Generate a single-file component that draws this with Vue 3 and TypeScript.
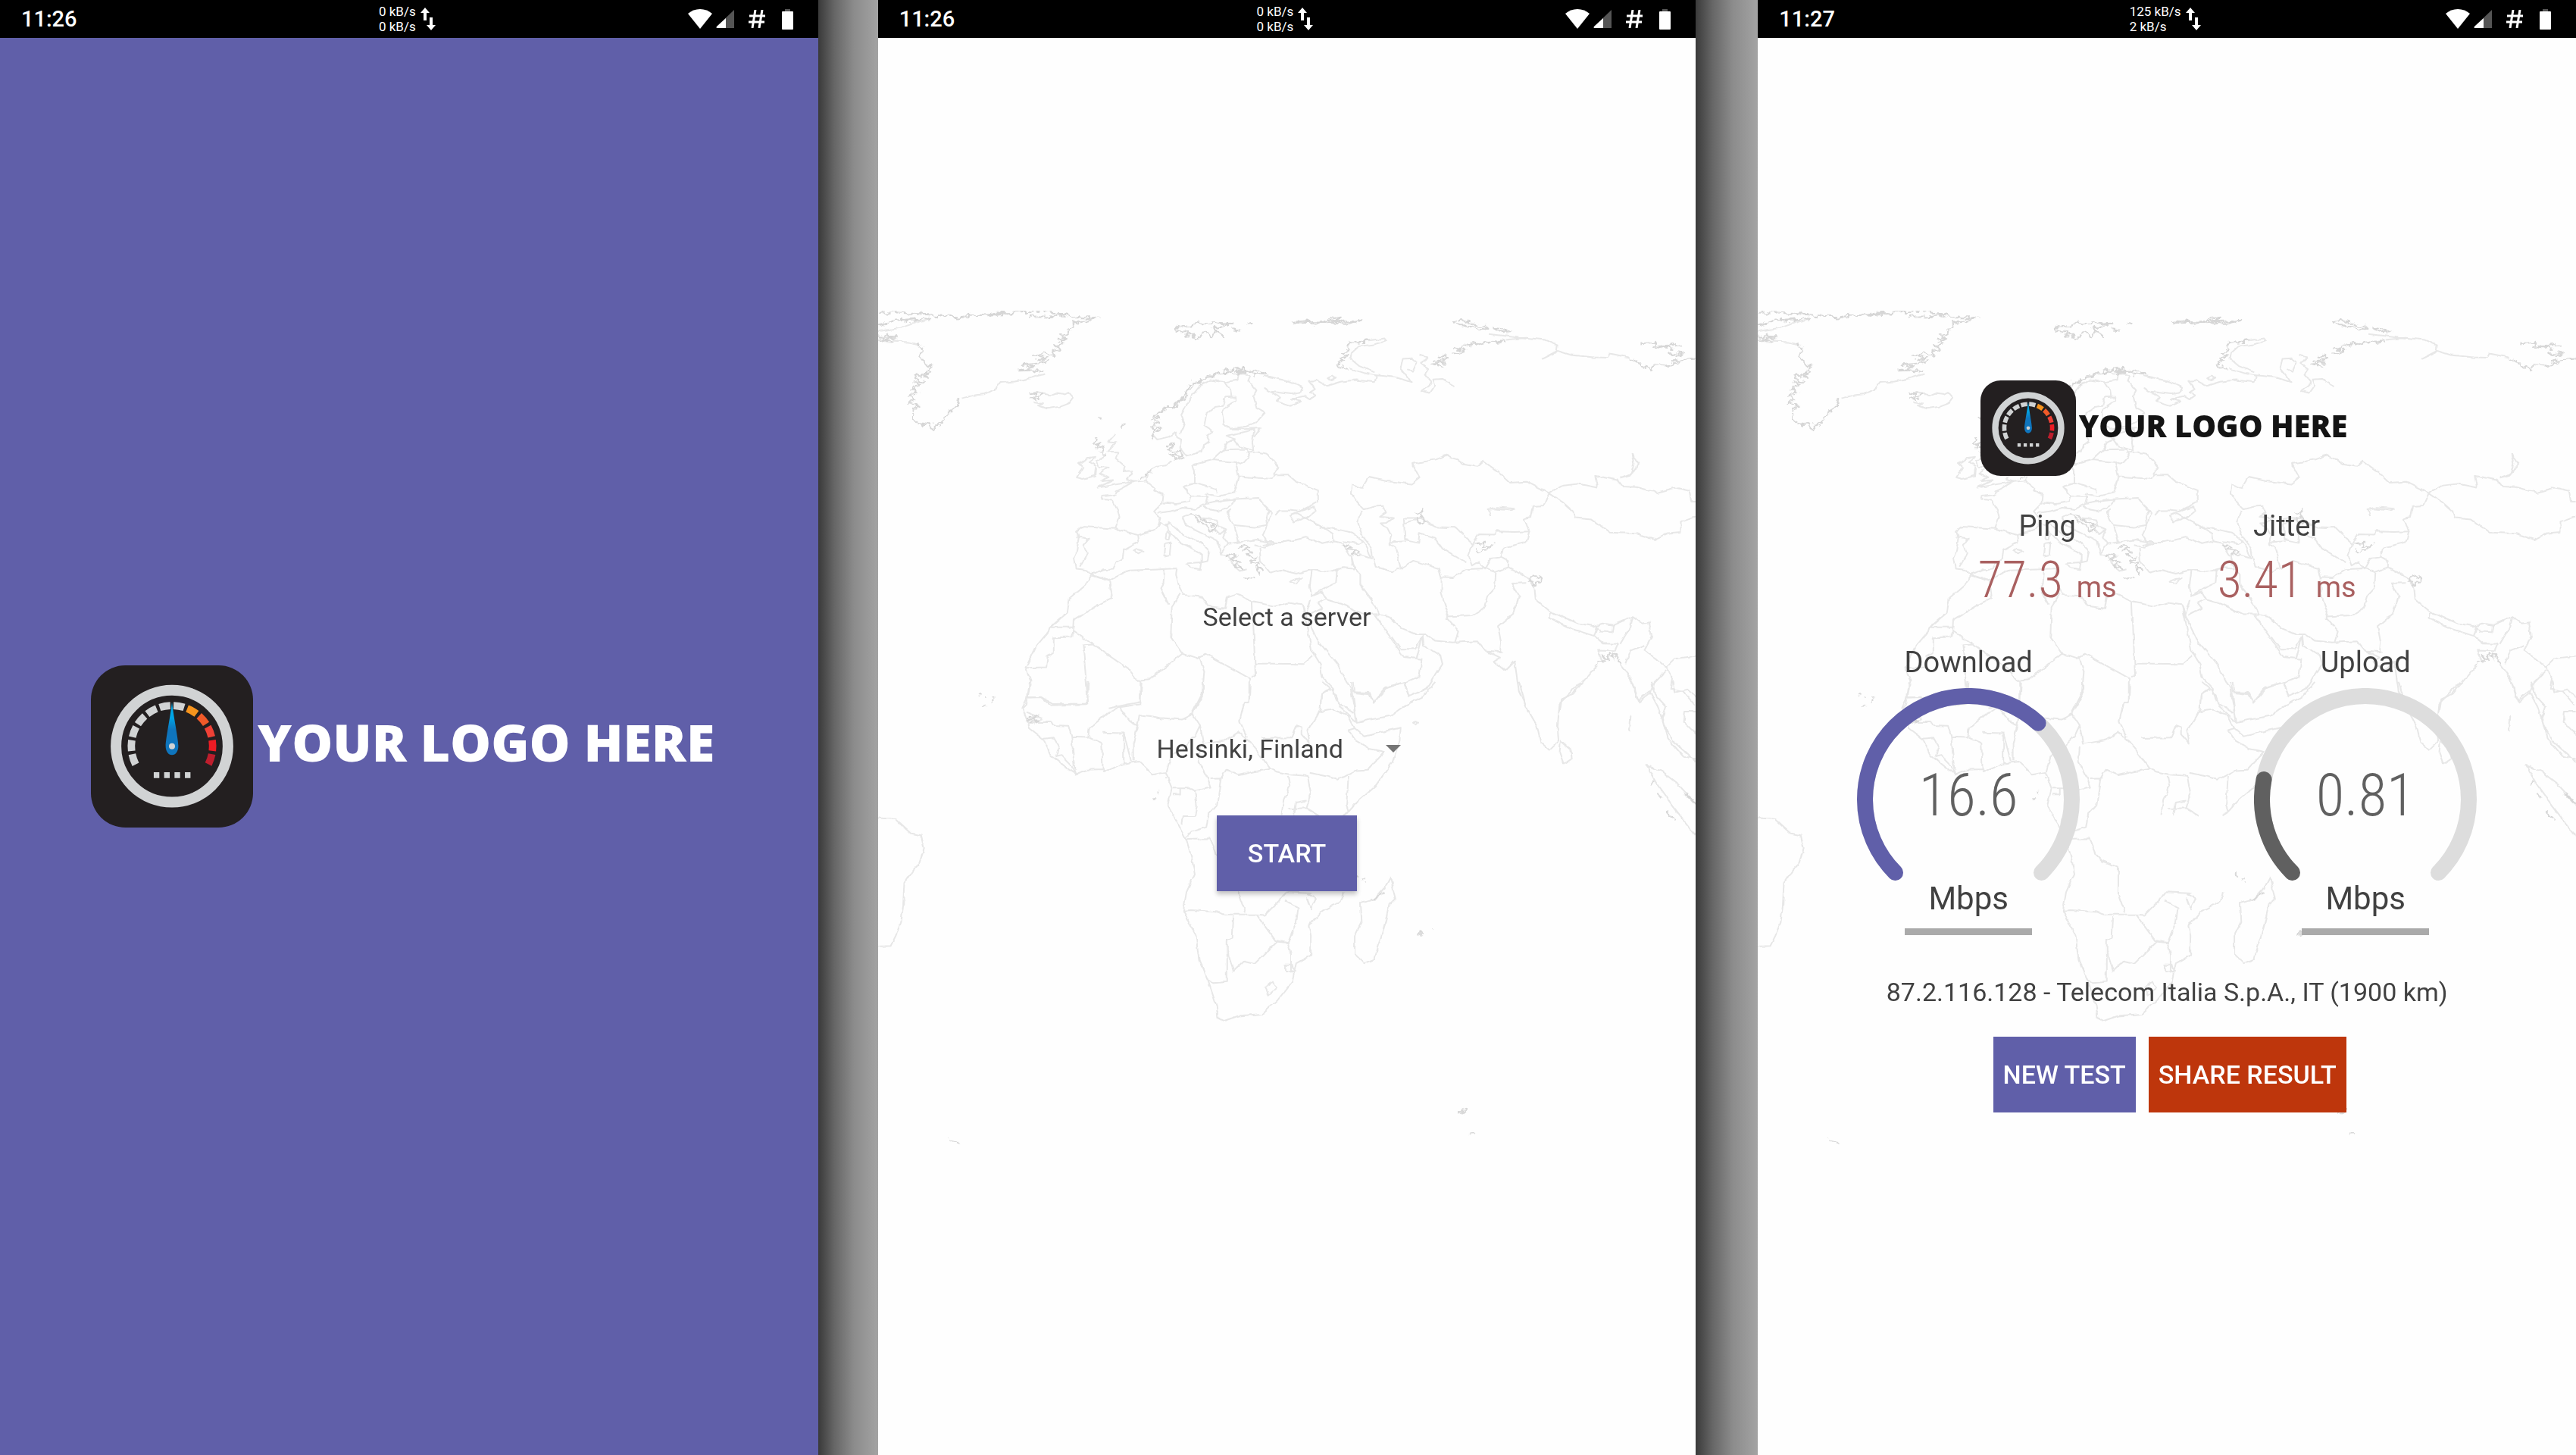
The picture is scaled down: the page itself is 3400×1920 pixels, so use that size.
<script setup lang="ts">
interface Phone {
  id: string
  kind: 'splash' | 'select' | 'result'
  time: string
  up: string
  down: string
}

const phones: Phone[] = [
  { id: 'splash', kind: 'splash', time: '11:26', up: '0 kB/s', down: '0 kB/s' },
  { id: 'select', kind: 'select', time: '11:26', up: '0 kB/s', down: '0 kB/s' },
  { id: 'result', kind: 'result', time: '11:27', up: '125 kB/s', down: '2 kB/s' },
]

const latencies = [
  { label: 'Ping', value: '77.3' },
  { label: 'Jitter', value: '3.41' },
]

const gauges = [
  { label: 'Download', value: '16.6', share: 65.7, color: '#605fa9' },
  { label: 'Upload', value: '0.81', share: 20.8, color: '#606060' },
]

const arc = 'M50.5 243.5A136.5 136.5 0 1 1 243.5 243.5'

const tickColors = [
  '#d1d3d4', '#d1d3d4', '#d1d3d4', '#d1d3d4', '#d1d3d4', '#d1d3d4',
  '#d1d3d4', '#f7941d', '#f15a29', '#ef4136', '#ed1c24', '#be1e2d',
]

function polar(r: number, deg: number): string {
  const a = (deg * Math.PI) / 180
  return `${(320 + r * Math.sin(a)).toFixed(1)} ${(319 - r * Math.cos(a)).toFixed(1)}`
}

const ticks = tickColors.map((color, i) => {
  const mid = -109 + i * 19.8
  return {
    color,
    d: `M${polar(175, mid - 7.6)}A175 175 0 0 1 ${polar(175, mid + 7.6)}L${polar(146, mid + 7.6)}A146 146 0 0 0 ${polar(146, mid - 7.6)}Z`,
  }
})

/* Coastlines drawn heavier, where fjords and islands crowd together */
const northRugged = [
  'M0 92L30 90 60 94 108 100 150 108 180 102 200 100 220 94 240 98 262 90 280 86 320 90 345 93 360 98 330 104 290 106M350 96L372 110 420 110 395 124 372 130 374 145 364 150 368 164 350 172 358 182 344 196 355 205 338 215 350 228 335 236 340 250 318 240 300 248 322 256 305 266 326 272 300 280 274 284 300 292 270 306 295 304 318 312',
  'M0 178L36 180 10 188 30 196 0 190M0 136L40 118 80 112 50 122 100 112M200 96L230 99 210 104 250 94 226 92 260 94',
  'M78 206L84 230 78 250 86 270 92 290 102 284 94 304 102 312 84 320 96 330 70 322 74 340 90 350 66 348 82 362 64 372 76 386 58 398 72 410 60 426 76 430 64 446 70 462 66 478 76 500 88 505 96 498 106 522 118 504 126 480 140 456 152 438 154 412',
  'M524 560L528 530 540 520 524 510 540 496 522 488 538 480 524 470 548 456 552 440 570 440 580 415 590 400 588 380 604 366 600 350 616 352 622 336 640 330 650 314 668 314 680 298 690 308 700 296 712 312 726 306 738 322 716 318 700 306 684 314 664 304 650 324 630 322 616 346 596 360 586 394 574 420 560 446',
  'M568 150L580 140 600 142 610 130 630 138 640 126 676 132 650 144 640 150 660 176 645 160 640 178 625 160 612 188 600 184 608 172 588 176 596 160 574 160ZM676 152L694 156M708 134L718 130',
  'M794 126L820 122 842 128 860 122 868 108 884 112 872 120 890 126 924 120 895 134 870 130 850 128 836 134 820 128 808 130ZM850 124L880 116 866 128 888 130',
  'M938 194L920 200 905 200 898 215 904 228 890 236 900 250 884 262 892 272 878 282 892 294 900 296',
  'M1100 124L1116 118 1136 132 1160 140 1166 154 1146 148 1130 142 1112 140ZM1176 148L1196 152 1210 160 1190 164Z',
  'M1102 240L1124 230 1106 224 1120 212 1150 206 1168 196 1184 204 1200 192M1074 250L1090 262 1064 268 1084 276 1060 282 1082 294M1456 206L1490 200 1486 216 1520 224 1498 214 1540 208M1436 256L1450 264 1456 282 1480 298 1484 286 1510 290 1530 280 1516 270 1566 262M1512 238L1540 244 1528 252Z',
  'M290 392L302 386 300 400 312 394 308 410 296 404 304 420 290 408M420 550L412 580 424 572 418 596 432 590 424 610 436 618M422 470L426 488M470 504L467 520',
  'M550 590L560 574 566 590 556 602 568 608 578 600 584 620 568 632 556 618 570 616 582 634',
  'M690 960L702 948 712 956 698 970 716 974 706 988 724 996 712 1012 730 1018 722 1030 738 1046 724 1040 730 1060M702 1072L716 1080 724 1078M668 984L684 992 676 1006 694 1014 680 1024 698 1040 690 1022',
  'M598 834L610 852 620 872 634 888 648 904 640 892 650 884 632 870 618 850 606 836',
  'M890 946L908 956 896 966 916 970 906 986 922 990M1030 830L1044 818 1036 850 1048 860 1038 872 1028 852M1140 946L1160 940 1154 956 1178 950 1164 968 1144 970',
  'M1376 1386L1392 1380 1384 1356 1398 1376 1400 1350 1408 1370 1412 1350 1420 1390M500 706L514 700 510 690 524 684M1246 1070L1256 1062 1268 1078 1258 1098 1248 1084Z',
]

/* Plain coastlines and borders of the northern half */
const northLines = [
  'M318 318L290 335 260 346 234 350 226 372 205 392 180 398 160 408M60 200L78 210M0 196L60 200M0 160L42 148 70 130 100 112',
  'M302 386L330 396 340 388 356 392 364 384 374 406 366 426 350 438 324 446 306 434 316 426 298 420',
  'M524 540L534 560 556 550 570 534 572 552 580 560 578 590 590 620 606 612 620 608 624 580 634 566 628 545 640 530 624 510 628 466 644 440 660 436 664 404 684 402 686 414 668 436 658 460 662 504 672 520 706 512 722 500 740 462 724 444 718 400 724 378 708 344 712 324',
  'M578 540L586 500 580 470 588 440 600 400 614 366 636 340 664 348 674 376 676 400M664 348L688 340 690 320 712 322',
  'M738 322L760 334 790 346 812 366 808 388 790 392 748 382 740 370 768 404 764 420 788 436 810 420 790 410 816 400 826 412 838 396 826 386 836 374 824 344 840 342 858 362 886 346 914 340 950 348 954 324 930 314 902 298M860 334l8-8 8 8-8 8ZM950 322L990 330 1020 348 1012 326 1000 296 1004 262 1020 260 1030 276 1022 310 1014 300M1036 248L1050 256 1040 280 1054 300 1046 324 1058 350 1040 380 1056 388 1066 360 1062 338 1080 336 1104 362M938 194L970 186 974 196 950 208 920 216 906 240 904 262 920 288 950 312',
  'M1200 192L1240 184 1276 192 1300 212 1298 236 1270 262 1300 232 1326 248 1370 256 1396 258 1400 242 1436 256M1170 170L1210 180 1240 188',
  'M436 618L416 640 424 660 440 664 424 684 440 700 428 714 450 710 420 738 450 728 490 716 474 708 486 690 484 676 470 678 472 658 456 632 460 606 440 604 456 572 440 570 454 540',
  'M400 628L384 650 392 664 380 700 392 706 416 694 418 660 404 642 416 624ZM490 716L468 740 456 752 454 764 430 770 428 780 448 786 458 820 462 850 454 890 420 886 390 882 380 898 384 920 380 970 374 996 378 1038 398 1042 408 1060 430 1040 450 1038 456 1012 468 1000 470 970 498 940 496 914 530 892 540 870 552 882 556 868 572 890 580 908 600 924 620 946 634 972 630 1010 620 1014 620 986 600 962 574 936 556 900 552 872',
  'M454 890L498 914M380 920L404 926 394 950 400 980 386 1030M588 1018L618 1014 616 1040 600 1034ZM550 944L560 940 558 986 548 990ZM552 902L558 912 556 930 550 924ZM490 974l6-8 12 6-8 12Z',
  'M490 716L512 712 516 680 534 660 552 656 560 640M512 712L530 740 528 752 546 762 544 794 528 826 540 850 536 882M546 794L570 798 596 790 600 768 584 734 606 722 606 680 602 654M602 654L640 636 684 644 690 696 684 736 680 758 650 770 626 760M606 722L630 734 646 744 648 760M600 768L630 770 626 800 606 818 584 812 560 824 536 832M626 796L660 784 684 780 668 816 650 826 634 822 624 806M684 780L728 776 740 806 750 824 742 850 744 876 720 884 680 876 668 830 676 818M690 696L752 706 760 690 784 690 800 716 842 748 842 790 806 826 788 822 768 822 760 840',
  'M640 636L660 600 706 598 712 616 696 650 684 644M660 600L668 572 680 560 690 586 718 600 716 570 720 524 690 536 668 546 684 560M706 610L726 606 746 614 766 662 756 692 M672 520L700 522 732 518 720 550',
  'M728 776L738 800 754 830 744 880 736 914 744 938 724 930 690 940 682 880M744 938L780 938 820 922 850 946 872 936 870 908 846 880 816 850 796 864 788 842 802 832 820 852 836 826 834 808 806 826M598 834L584 850 590 880 612 900 634 920 650 936 656 984 670 990 682 1030 692 1046 704 1040M618 850L648 856 652 880 666 892 660 920 670 946 690 940M666 892L654 910 646 894M670 946L656 980M736 950L756 944 740 960 720 950 M730 960L732 1010 750 1052 770 1042 800 1056 830 1042 860 1050 890 1034 910 1038 904 990 890 944 872 936',
  'M846 884L880 892 906 904 928 934 918 944 890 936M928 934L936 960 944 1000 920 986M904 986L906 1020 924 1060 924 1100 944 1150 958 1206 976 1212 1000 1256 1030 1280 1048 1280 1066 1304 1100 1310 1148 1306 1162 1340 1194 1346',
  'M800 1076L810 1072 800 1092 788 1086ZM830 1044L826 1100 830 1136 858 1106 876 1090 878 1042 M408 1060L440 1080 480 1044 540 1040 572 1036 570 1060 576 1100 584 1134 620 1142 632 1176 664 1184 668 1144 686 1132 716 1160 760 1176 784 1164 812 1172 818 1210 828 1150 M828 1140L850 1124 858 1150 842 1164 850 1184 824 1210M858 1152L890 1170 930 1206 958 1206',
  'M926 740L908 728 906 760 916 790 930 818 950 808 966 806 972 830 960 846 986 850 974 868 960 870 974 886 982 916 978 944 990 962 1000 1036 984 1048 952 1030 946 990 944 960 926 914 918 866 926 826',
  'M926 740L938 700 974 714 1020 724 1036 700 1022 650 1066 634 1088 618 1104 632 1120 652 1146 660 1158 640 1184 676 1208 720 1240 716 1284 758 1274 804 1254 806 1250 846 1236 852 1246 900 1218 902 1184 900 1180 912 1150 910 1138 944 1120 914 1106 886 1070 884 1036 850 1006 850 1008 930 1034 940 1036 908 1066 926 1080 964 1124 1014 M1036 850L1006 870 M978 940L1010 936',
  'M1284 758L1310 730 1340 724 1376 738 1372 694 1414 710 1424 734 1450 736 1490 756 1526 738 1552 750 1556 790 1566 790M1284 758L1310 792 1330 826 1334 850 1366 856 1400 904 1452 908 1486 930 1512 906 1536 902 1536 866 1566 844M1442 612L1454 650 1440 694 1422 704 1440 690 1446 650ZM1172 846L1168 818 1184 810 1216 816 1210 822 1178 816',
  'M1246 900L1240 940 1196 960 1192 994 1206 1010 1206 1032 1246 1076 1256 1110 1258 1150 1286 1196 1340 1240 1370 1250 1386 1240 1408 1246 1444 1216 1462 1240 1476 1236 1480 1290 1466 1340 1490 1370 1508 1400 1524 1370 1566 1360M1138 944L1130 990 1136 1026 1150 1010 1160 1040 1172 1000 1196 994M1000 1036L1024 1008 1072 1036 1078 1068 1100 1070 1124 1040 1160 1036 1182 1050 1206 1032M1182 1050L1180 1110 1166 1140 1160 1180 1136 1210 1088 1214M1078 1068L1078 1130 1090 1200 1088 1220 1110 1270 1104 1308M1240 1090L1212 1092 1226 1140 1216 1200 1186 1250 1192 1310 1190 1350',
  'M1286 1196L1284 1220 1330 1262 1370 1286 1376 1250M1376 1250L1382 1270 1406 1272 1408 1246M1370 1286L1388 1314 1416 1316 1410 1342 1376 1340 1388 1386M1162 1340L1190 1366 1178 1380 1200 1416 1218 1380 1226 1490 1244 1568M1376 1392L1330 1500 1308 1520 1304 1568M1420 1316L1440 1250 1444 1216M1420 1390L1440 1440 1456 1530 1476 1500 1484 1460 1508 1412M1466 1320L1440 1340 1430 1390M1508 1400L1520 1440 1516 1480 1540 1490 1562 1540',
  'M408 1062L396 1100 366 1150 362 1200 328 1256 326 1270 300 1330 282 1404 292 1450 284 1540 276 1556M408 1062L444 1084 448 1146 420 1172 374 1228 372 1290 336 1292 336 1350 324 1362 322 1402 284 1404M328 1254L372 1254M374 1268L480 1410 496 1450 520 1446 582 1352 560 1290 562 1180 578 1130M548 1040L546 1090 540 1110 556 1170M412 1318L392 1320 402 1536 334 1538 312 1512 286 1514M502 1450L502 1530 440 1554',
  'M582 1352L610 1370 626 1352 712 1444 710 1530 700 1536 696 1568M616 1366L624 1420 620 1500 602 1568M716 1160L722 1432 714 1434M722 1388L814 1390 832 1360M812 1172L830 1340 846 1390 850 1440 870 1480 848 1500 846 1560M818 1210L840 1300 878 1390 904 1480 912 1568M914 1494L940 1496 948 1532 970 1476 1006 1458 1036 1434 1040 1372 1006 1364 980 1290 950 1210M1006 1458L1016 1510 1050 1480 1080 1390 1076 1360 1044 1320 1042 1284 1028 1334 1000 1334 984 1290M1042 1284L1030 1370M870 1480L878 1530 910 1568',
]

/* Southern half */
const southLines = [
  'M290 0L286 50 276 84 284 120 290 150 316 184 330 236 376 298 400 284 430 282 432 292 470 264 500 258 526 300 550 292 562 344 554 400 574 460 590 510 600 570 606 620 590 680 584 740 608 820 614 900 632 970 648 1050 650 1086 662 1096 690 1080 736 1074 764 1030 792 970 800 910 828 884 828 820 824 790 850 740 884 710 890 680M286 50L312 50 330 76 400 72 402 0M284 100L312 118M284 130L330 130 334 140 364 142 370 176 402 178 404 150 440 100 462 82 502 72 504 0M316 184L336 180 346 210 340 240 350 236 370 270 376 298M370 176L376 284M404 178L428 196 430 282M428 164L470 166 470 264M470 166L484 256M462 82L484 130 496 144 488 200 488 256M496 144L500 106 540 116 580 122 602 104 622 40 622 0',
  'M602 104L616 140 606 176 580 220 560 244 552 292M616 140L622 200 630 198 664 190 690 162 712 196 724 220 750 280 762 290 790 300 824 304M710 0L710 66 700 70 692 126 706 180M616 210L614 260 630 310 636 340 606 350 600 344 564 344M636 314L656 312 666 284 690 302 720 290 750 282M656 312L648 400 632 430 628 470 600 484 590 500M564 364L578 364 578 344M606 350L610 400 606 434 584 434 582 462M590 508L634 506 646 556 660 580 690 600 690 690 702 746M584 740L600 738 650 744 660 752 724 752 740 754 766 710 780 680 830 684M724 752L740 790 760 836 784 844 800 780 804 730 780 708M680 758L678 830 668 836 668 970 640 974 632 966M668 870L680 936 700 904 720 912 764 840 784 844 790 880 790 940 800 936M740 990L754 970 764 986 746 1012Z',
  'M734 182L790 180 800 140 810 146 810 170 826 200 822 160 840 110 846 90 848 40 864 20 850 0M846 96L872 90 900 110 912 150 900 156 914 190 940 216 968 226 936 284 914 286 880 316 860 306 826 294M912 150L930 176 1000 148 998 190 984 260 950 340 916 390 900 420 888 432M900 304L896 400 900 420M784 304L788 340 776 380 772 430M822 304L828 360 820 408 784 410M796 430L800 390 820 384M820 408L846 434M868 20L884 80 916 130 980 110 1008 76 1040 50 1066 0M910 0L912 34 940 40 948 68 972 20 1006 0 1016 48M916 130L912 90 906 0M1022 132l6-4 6 4-6 6ZM822 686L838 700 828 736 820 700',
  'M980 632L990 700 978 720 970 780 950 896 930 910 912 880 912 820 924 780 922 716 950 704 968 670ZM780 914L792 914 796 940 780 936Z',
  'M0 440L34 444 64 490 82 496 88 540 78 590 66 610 50 650 48 720 44 780 34 820 24 854 0 856M1226 0L1240 80 1260 140 1268 196 1284 220 1302 190 1300 150 1304 70 1346 0M1306 190L1324 216 1326 250 1312 266 1304 230ZM1442 0L1454 60 1476 30 1492 80 1504 140 1520 190 1566 260M1470 270L1490 330 1520 400 1566 500M1470 270L1500 290 1530 330 1552 370 1566 400M1480 0L1486 40 1508 80 1500 120 1510 180 1540 240 1566 250M1520 0L1524 34 1550 24 1566 50M1566 96L1544 96 1542 130 1566 170M1440 110L1438 160',
]

const southRugged = [
  'M284 116L310 110 286 124 312 124 290 132M946 706L960 690 966 676M1112 1396L1116 1378 1126 1388 1118 1396 1116 1384M1132 1462h6M134 1480L148 1486 156 1498M1036 816l4-4 2 8M1060 800h2M194 40h4M206 46h4M218 52v12M200 80h8M548 314h4M536 350v6M528 384v-8M916 620v14M926 638h6M936 648v4M1540 360L1560 380 1550 372 1566 400M1478 330h4M1492 360l8 16M1508 420l18 32',
]
</script>

<template>
  <svg class="defs" aria-hidden="true">
    <defs>
      <filter id="rugged" x="0" y="0" width="100%" height="100%">
        <feTurbulence type="fractalNoise" baseFrequency="0.11" numOctaves="3" seed="4" />
        <feDisplacementMap in="SourceGraphic" scale="11" xChannelSelector="R" yChannelSelector="G" />
      </filter>
      <filter id="coast" x="0" y="0" width="100%" height="100%">
        <feTurbulence type="fractalNoise" baseFrequency="0.09" numOctaves="2" seed="9" />
        <feDisplacementMap in="SourceGraphic" scale="5" xChannelSelector="R" yChannelSelector="G" />
      </filter>
      <linearGradient id="needle" x1="0" y1="0" x2="0" y2="1">
        <stop offset="0" stop-color="#00aeef" />
        <stop offset="0.3" stop-color="#00a3e4" />
        <stop offset="0.52" stop-color="#0f75bd" />
        <stop offset="1" stop-color="#0f75bd" />
      </linearGradient>
      <symbol id="logo-mark" viewBox="0 0 640 640">
        <rect width="640" height="640" rx="136" fill="#231f20" />
        <circle cx="320" cy="319" r="221" fill="none" stroke="#d1d3d4" stroke-width="42" />
        <path v-for="tick in ticks" :key="tick.d" :d="tick.d" :fill="tick.color" />
        <path d="M320 144C324 190 345 290 345 318C345 340 334 354 320 354S295 340 295 318C295 290 316 190 320 144Z" fill="url(#needle)" />
        <circle cx="320" cy="319" r="12" fill="#d1d3d4" />
        <path d="M248 422h22v23h-22ZM289 422h22v23h-22ZM330 422h22v23h-22ZM371 422h22v23h-22Z" fill="#d1d3d4" />
      </symbol>
      <symbol id="world" viewBox="0 0 1080 1160">
        <g filter="url(#coast)">
          <g class="lines" transform="scale(.69 .357143)">
            <path v-for="d in northLines" :key="d" :d="d" />
          </g>
          <g class="lines" transform="translate(0 520) scale(.69 .408163)">
            <path v-for="d in southLines" :key="d" :d="d" />
          </g>
        </g>
        <g filter="url(#rugged)">
          <g class="lines heavy" transform="scale(.69 .357143)">
            <path v-for="d in northRugged" :key="d" :d="d" />
          </g>
          <g class="lines heavy" transform="translate(0 520) scale(.69 .408163)">
            <path v-for="d in southRugged" :key="d" :d="d" />
          </g>
        </g>
      </symbol>
    </defs>
  </svg>

  <main class="board">
    <section v-for="phone in phones" :key="phone.id" class="phone" :class="phone.kind">
      <header class="status">
        <time class="clock">{{ phone.time }}</time>
        <div class="traffic">
          <div class="rates">
            <span>{{ phone.up }}</span>
            <span>{{ phone.down }}</span>
          </div>
          <svg class="arrows" viewBox="0 0 20 30" aria-hidden="true">
            <path d="M6 0L12 7H8V17H4V7H0ZM14 30L8 23H12V13H16V23H20Z" fill="#fff" />
          </svg>
        </div>
        <div class="indicators">
          <svg class="wifi" viewBox="0 0 32 26" aria-hidden="true">
            <path d="M16 26L0 6Q7 0 16 0T32 6Z" fill="#fff" />
          </svg>
          <svg class="signal" viewBox="0 0 24 24" aria-hidden="true">
            <path d="M24 0V24H1Q0 23 1 22Z" fill="#555" />
            <path d="M13 11V24H1Q0 23 1 22Z" fill="#fff" />
          </svg>
          <svg class="hash" viewBox="0 0 22 24" aria-hidden="true">
            <path d="M9 0L5 24M18 0L14 24M1 8H22M0 16H21" fill="none" stroke="#fff" stroke-width="3" />
          </svg>
          <svg class="battery" viewBox="0 0 15 27" aria-hidden="true">
            <path d="M4 0h7v3h-7z" fill="#555" />
            <rect y="3" width="15" height="24" rx="1" fill="#fff" />
          </svg>
        </div>
      </header>

      <div v-if="phone.kind === 'splash'" class="body splash-body">
        <div class="logo large">
          <svg class="mark" aria-hidden="true"><use href="#logo-mark" /></svg>
          <span class="wordmark">YOUR LOGO HERE</span>
        </div>
      </div>

      <div v-else-if="phone.kind === 'select'" class="body">
        <svg class="map" viewBox="0 0 1080 1160" aria-hidden="true"><use href="#world" /></svg>
        <label class="prompt" for="server">Select a server</label>
        <div class="picker">
          <select id="server">
            <option>Helsinki, Finland</option>
          </select>
          <svg class="caret" viewBox="0 0 20 10" aria-hidden="true">
            <path d="M0 0H20L10 10Z" fill="#757575" />
          </svg>
        </div>
        <button type="button" class="action start">START</button>
      </div>

      <div v-else class="body">
        <svg class="map" viewBox="0 0 1080 1160" aria-hidden="true"><use href="#world" /></svg>
        <div class="logo small">
          <svg class="mark" aria-hidden="true"><use href="#logo-mark" /></svg>
          <span class="wordmark">YOUR LOGO HERE</span>
        </div>
        <div class="latencies">
          <div v-for="item in latencies" :key="item.label" class="latency">
            <span class="name">{{ item.label }}</span>
            <span class="reading"><span class="figure">{{ item.value }}</span><span class="unit">ms</span></span>
          </div>
        </div>
        <div class="gauges">
          <div v-for="gauge in gauges" :key="gauge.label" class="gauge">
            <span class="name">{{ gauge.label }}</span>
            <div class="dial">
              <svg viewBox="0 0 294 254" aria-hidden="true">
                <path :d="arc" class="track" />
                <path :d="arc" class="fill" pathLength="100" :stroke="gauge.color" :stroke-dasharray="`${gauge.share} 200`" />
              </svg>
              <span class="speed">{{ gauge.value }}</span>
            </div>
            <span class="mbps">Mbps</span>
          </div>
        </div>
        <p class="provider">87.2.116.128 - Telecom Italia S.p.A., IT (1900 km)</p>
        <div class="actions">
          <button type="button" class="action">NEW TEST</button>
          <button type="button" class="action share">SHARE RESULT</button>
        </div>
      </div>
    </section>
  </main>
</template>

<style>
body {
  margin: 0;
}
</style>

<style scoped>
.defs {
  position: absolute;
  width: 0;
  height: 0;
}

.board {
  display: grid;
  grid-template-columns: 1fr 79px 1fr 82px 1fr;
  min-height: 100vh;
  background: #fefefe;
  font-family: Roboto, "Liberation Sans", sans-serif;
  color: #414141;
}

.board::before,
.board::after {
  content: "";
  grid-row: 1;
  background: linear-gradient(90deg, #3a3a3a, #666 27%, #8c8c8c 60%, #a3a3a3);
}

.board::before {
  grid-column: 2;
}

.board::after {
  grid-column: 4;
}

.phone {
  grid-row: 1;
  display: flex;
  flex-direction: column;
  background: #fefefe;
}

.phone.splash {
  grid-column: 1;
  background: #605fa9;
}

.phone.select {
  grid-column: 3;
}

.phone.result {
  grid-column: 5;
}

.status {
  display: grid;
  grid-template-columns: 1fr auto 1fr;
  align-items: center;
  height: 50px;
  padding: 0 33px 0 28px;
  background: #000;
  color: #fff;
}

.clock {
  font-size: 29px;
  font-weight: 500;
  line-height: 34px;
}

.traffic {
  display: flex;
  align-items: center;
  gap: 6px;
}

.rates {
  display: flex;
  flex-direction: column;
  font-size: 17px;
  line-height: 20px;
}

.arrows {
  width: 20px;
  height: 30px;
}

.indicators {
  display: flex;
  justify-content: flex-end;
  align-items: center;
}

.wifi {
  width: 32px;
  height: 26px;
  margin-right: 5px;
}

.signal {
  width: 24px;
  height: 24px;
  margin-right: 19px;
}

.hash {
  width: 22px;
  height: 24px;
  margin-right: 22px;
}

.battery {
  width: 15px;
  height: 27px;
}

.body {
  position: relative;
  z-index: 0;
  flex: 1;
  display: flex;
  flex-direction: column;
  justify-content: center;
  align-items: center;
}

.splash-body {
  align-items: flex-start;
  padding-left: 120px;
}

.map {
  position: absolute;
  z-index: -1;
  top: 330px;
  left: 0;
  width: 100%;
}

.lines {
  fill: none;
  stroke: #e7e7e7;
  stroke-width: 2px;
  stroke-linejoin: round;
}

.lines path {
  vector-effect: non-scaling-stroke;
}

.heavy {
  stroke: #d6d6d6;
}

.logo {
  display: flex;
  align-items: center;
  font-family: "Open Sans", "Noto Sans", sans-serif;
  font-weight: 800;
  white-space: nowrap;
}

.large {
  gap: 6px;
  color: #fff;
  font-size: 68px;
  line-height: 84px;
}

.large .mark {
  width: 214px;
  height: 214px;
}

.large .wordmark {
  padding-bottom: 13px;
}

.small {
  gap: 4px;
  padding-right: 8px;
  color: #141414;
  font-size: 40px;
  line-height: 48px;
}

.small .mark {
  width: 126px;
  height: 126px;
}

.small .wordmark {
  padding-bottom: 6px;
}

.prompt {
  font-size: 34px;
  line-height: 40px;
}

.picker {
  position: relative;
  width: 344px;
  margin: 124px 0 58px;
}

select {
  width: 100%;
  height: 60px;
  padding: 0;
  border: 0;
  appearance: none;
  background: transparent;
  color: inherit;
  font: inherit;
  font-size: 34px;
}

.caret {
  position: absolute;
  top: 25px;
  right: 21px;
  width: 20px;
  height: 10px;
}

.action {
  height: 100px;
  padding: 0 13px;
  border: 0;
  background: #605fa9;
  color: #fff;
  font-family: inherit;
  font-size: 34px;
  font-weight: 500;
  white-space: nowrap;
}

.start {
  width: 185px;
  box-shadow: 0 4px 6px rgba(0, 0, 0, 0.24);
}

.share {
  background: #be360c;
}

.latencies {
  display: flex;
  justify-content: center;
  gap: 76px;
  margin-top: 44px;
}

.latency {
  width: 240px;
  display: flex;
  flex-direction: column;
  align-items: center;
  gap: 15px;
}

.name {
  font-size: 38px;
  line-height: 44px;
}

.reading {
  display: flex;
  align-items: baseline;
  gap: 18px;
  color: #a96060;
  line-height: 70px;
}

.figure {
  font-family: "Roboto Condensed", Roboto, sans-serif;
  font-size: 66px;
  font-weight: 300;
}

.unit {
  font-size: 38px;
}

.gauges {
  display: flex;
  gap: 230px;
  margin-top: 42px;
}

.gauge {
  width: 294px;
  display: flex;
  flex-direction: column;
  align-items: center;
}

.dial {
  display: grid;
  place-items: center;
  margin-top: 12px;
}

.dial > * {
  grid-area: 1 / 1;
}

.dial svg {
  width: 294px;
  height: 254px;
}

.track,
.fill {
  fill: none;
  stroke-width: 21px;
  stroke-linecap: round;
}

.track {
  stroke: #ddd;
}

.speed {
  padding-top: 30px;
  color: #606060;
  font-family: "Roboto Condensed", Roboto, sans-serif;
  font-size: 77px;
  font-weight: 300;
  line-height: 90px;
}

.mbps {
  width: 168px;
  padding-bottom: 15px;
  border-bottom: 9px solid #aaa;
  font-size: 42px;
  line-height: 48px;
  text-align: center;
}

.provider {
  margin: 55px 0 39px;
  font-size: 34px;
  line-height: 40px;
}

.actions {
  display: flex;
  gap: 17px;
  padding-left: 7px;
}
</style>
